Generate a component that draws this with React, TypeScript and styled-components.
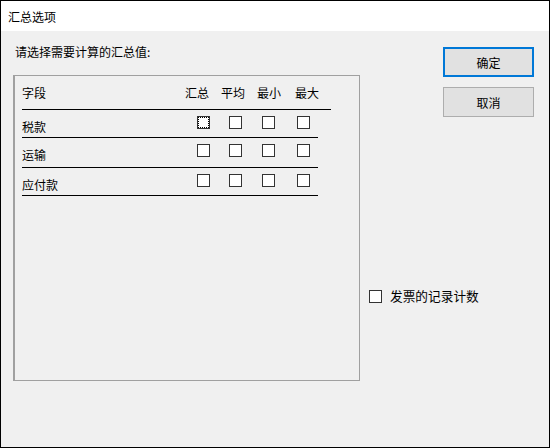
import styled, { createGlobalStyle } from "styled-components";

const GlobalStyle = createGlobalStyle`
  html, body {
    margin: 0;
    padding: 0;
    background: #ffffff;
  }
  * {
    box-sizing: border-box;
  }
`;

// dialog frame
const Window = styled.div`
  width: 550px;
  height: 448px;
  border: 1px solid #000000;
  background: #f0f0f0;
  font-family: "Noto Sans CJK SC", "Noto Sans", sans-serif;
  font-size: 12px;
  color: #000000;
  display: flex;
  flex-direction: column;
`;

const TitleBar = styled.div`
  height: 30px;
  background: #ffffff;
  padding-left: 7px;
  display: flex;
  align-items: center;
  font-size: 12px;
`;

const Body = styled.div`
  flex: 1;
  display: flex;
`;

const LeftCol = styled.div`
  width: 359px;
  padding: 13px 0 0 12px;
  display: flex;
  flex-direction: column;
`;

const Prompt = styled.div`
  padding-left: 2px;
  line-height: 16px;
  height: 16px;
  margin-bottom: 15px;
`;

// the sunken list box
const ListBox = styled.div`
  width: 347px;
  height: 306px;
  border: 1px solid #a0a0a0;
  border-left: 2px solid #a0a0a0;
  padding-left: 7px;
`;

const HeaderRow = styled.div`
  width: 309px;
  height: 34px;
  padding-top: 9px;
  border-bottom: 1px solid #000000;
  display: grid;
  grid-template-columns: 163px 36px 36px 38px 24px;
  line-height: 16px;
`;

const Row = styled.div<{ $h: number }>`
  width: 296px;
  height: ${(p) => p.$h}px;
  border-bottom: 1px solid #000000;
  display: grid;
  grid-template-columns: 175px 32px 33px 35px 13px;
  align-items: start;
  padding-top: 6px;
`;

const FieldName = styled.div`
  line-height: 16px;
  margin-top: 3px;
`;

const Check = styled.span<{ $focus?: boolean }>`
  position: relative;
  display: block;
  width: 13px;
  height: 13px;
  border: 1px solid #333333;
  background: #ffffff;

  ${(p) =>
    p.$focus &&
    `
    &::after {
      content: "";
      position: absolute;
      inset: 0;
      border: 1px dotted #000000;
    }
  `}
`;

const RightCol = styled.div`
  flex: 1;
  padding: 16px 15px 0 9px;
  display: flex;
  flex-direction: column;
`;

const ButtonStack = styled.div`
  align-self: flex-end;
  display: flex;
  flex-direction: column;
  gap: 10px;
`;

const Button = styled.button<{ $primary?: boolean }>`
  width: 91px;
  height: 30px;
  background: #e1e1e1;
  border: ${(p) => (p.$primary ? "2px solid #0078d7" : "1px solid #adadad")};
  font-family: inherit;
  font-size: 12px;
  color: #000000;
  padding: 0;
`;

const CountOption = styled.label`
  margin-top: 171px;
  display: flex;
  align-items: center;
  gap: 8px;
  font-size: 12.7px;
  line-height: 16px;
`;

const fields = [
  { name: "税款", h: 28 },
  { name: "运输", h: 30 },
  { name: "应付款", h: 28 },
];

const columns = ["汇总", "平均", "最小", "最大"];

const App = () => {
  return (
    <>
      <GlobalStyle />
      <Window>
        <TitleBar>汇总选项</TitleBar>
        <Body>
          <LeftCol>
            <Prompt>请选择需要计算的汇总值:</Prompt>
            <ListBox>
              <HeaderRow>
                <span>字段</span>
                {columns.map((c) => (
                  <span key={c}>{c}</span>
                ))}
              </HeaderRow>
              {fields.map((f, i) => (
                <Row key={f.name} $h={f.h}>
                  <FieldName>{f.name}</FieldName>
                  {columns.map((c, j) => (
                    <Check key={c} $focus={i === 0 && j === 0} />
                  ))}
                </Row>
              ))}
            </ListBox>
          </LeftCol>
          <RightCol>
            <ButtonStack>
              <Button $primary>确定</Button>
              <Button>取消</Button>
            </ButtonStack>
            <CountOption>
              <Check />
              发票的记录计数
            </CountOption>
          </RightCol>
        </Body>
      </Window>
    </>
  );
};

export default App;
